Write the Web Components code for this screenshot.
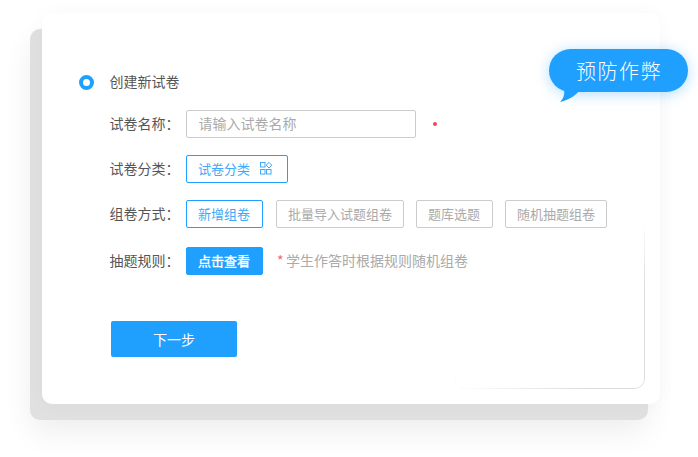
<!DOCTYPE html>
<html lang="zh"><head><meta charset="utf-8">
<style>html,body{margin:0;background:#fff}</style>
</head><body>
<exam-stage>
  <exam-row kind="head"><exam-radio></exam-radio><span>创建新试卷</span></exam-row>
  <exam-row label="试卷名称："><exam-input placeholder="请输入试卷名称"></exam-input><exam-dot></exam-dot></exam-row>
  <exam-row label="试卷分类："><exam-btn variant="outline" w="102"><span>试卷分类</span><exam-icon></exam-icon></exam-btn></exam-row>
  <exam-row label="组卷方式：" class="tall">
    <exam-btn variant="outline" w="77">新增组卷</exam-btn>
    <exam-btn w="128" gap="13">批量导入试题组卷</exam-btn>
    <exam-btn w="77" gap="12">题库选题</exam-btn>
    <exam-btn w="102" gap="12">随机抽题组卷</exam-btn>
  </exam-row>
  <exam-row label="抽题规则："><exam-btn variant="solid" w="77">点击查看</exam-btn><exam-hint>学生作答时根据规则随机组卷</exam-hint></exam-row>
  <exam-next>下一步</exam-next>
  <exam-bubble slot="over">预防作弊</exam-bubble>
</exam-stage>
<script>
const FONT = '"Noto Sans CJK SC","Noto Sans",sans-serif';
function def(name, css, html, init){
  customElements.define(name, class extends HTMLElement{
    constructor(){
      super();
      const r=this.attachShadow({mode:'open'});
      r.innerHTML='<style>'+css+'</style>'+(typeof html==='function'?html(this):html);
    }
    connectedCallback(){ if(init) init(this); }
  });
}
def('exam-stage',`
  :host{display:block;position:relative;width:698px;height:457px;overflow:hidden;font:14px/20px ${FONT};color:#555;box-sizing:border-box;padding:13px 38px 53px 42px}
  .back{position:absolute;left:30px;top:29px;width:618px;height:391px;background:#e0e0e0;border-radius:10px;box-shadow:0 12px 30px rgba(0,0,0,.07)}
  .card{position:relative;box-sizing:border-box;height:391px;background:#fff;border-radius:10px;box-shadow:0 0 20px rgba(0,0,0,.03);padding:59px 0 0 37px;display:flex;flex-direction:column}
  .edge{position:absolute;right:15px;bottom:15px;width:190px;height:170px;box-sizing:border-box;border:1px solid #dcdcdc;border-radius:10px;
    -webkit-mask-image:linear-gradient(to right,transparent 0,#000 70%),linear-gradient(to bottom,transparent 0,#000 40%);-webkit-mask-composite:source-in;mask-composite:intersect}
  ::slotted([slot=over]){position:absolute;left:549px;top:49px}
`,`<div class="back"></div><div class="card"><div class="edge"></div><slot></slot></div><slot name="over"></slot>`);
def('exam-row',`
  :host{display:flex;align-items:center;height:28px;margin-bottom:17px;margin-left:30.5px}
  :host(.tall){margin-bottom:19px}
  :host([kind=head]){height:20px;margin:0 0 18px 0;padding-bottom:0}
  :host([kind=head]) ::slotted(span){padding-bottom:3px}
  .l{width:76.5px;flex:none;white-space:nowrap;padding-bottom:2px}
  slot{display:contents}
`,h=>h.hasAttribute('label')?`<span class="l">${h.getAttribute('label')}</span><slot></slot>`:`<slot></slot>`);
def('exam-radio',`
  :host{display:block;width:15px;height:15px;box-sizing:border-box;border-radius:50%;border:4px solid #1fa0ff;background:#fff;margin-right:15.5px}
`,'');
def('exam-input',`
  :host{display:block;width:230px;height:28px;box-sizing:border-box;border:1px solid #ccc;border-radius:2px;padding:2px 11.5px;color:#aaa;background:#fff}
`,h=>`<span>${h.getAttribute('placeholder')}</span>`);
def('exam-dot',`
  :host{display:block;width:4px;height:4px;border-radius:50%;background:#f0484f;margin-left:17px}
`,'');
def('exam-btn',`
  :host{display:flex;align-items:center;justify-content:flex-start;box-sizing:border-box;height:28px;border:1px solid #ccc;border-radius:2px;padding:0 11px 1px;color:#aaa;white-space:nowrap;background:#fff;font-size:13px}
  :host([variant=outline]){border-color:#1fa0ff;color:#3ea9f7}
  :host([variant=solid]){border-color:#1fa0ff;background:#1fa0ff;color:#fff;-webkit-text-stroke:.35px #fff}
  slot{display:contents}
`,'<slot></slot>',h=>{h.style.width=h.getAttribute('w')+'px';const g=h.getAttribute('gap');if(g)h.style.marginLeft=g+'px';});
def('exam-icon',`
  :host{display:block;width:13px;height:13px;margin-left:10px}
  svg{display:block}
`,`<svg width="13" height="13" viewBox="0 0 13 13" fill="none" stroke="#3ea9f7" stroke-width="1"><rect x=".5" y=".5" width="4.5" height="4.5"/><path d="M9 .4 11.8 3.2 9 6 6.2 3.2Z"/><rect x=".5" y="7.5" width="4.5" height="4.5"/><rect x="6.5" y="7.5" width="4.5" height="4.5"/></svg>`);
def('exam-hint',`
  :host{display:block;margin-left:14px;color:#aaa;white-space:nowrap;padding-bottom:2px}
  i{font-style:normal;color:#f0686c;margin-right:4px;display:inline-block;width:5px}
`,'<i>*</i><slot></slot>');
def('exam-next',`
  :host{display:flex;align-items:center;justify-content:center;width:126px;height:36px;margin:29px 0 0 32px;padding-bottom:1px;background:#1fa0ff;color:#fff;border-radius:2px;box-sizing:border-box;align-self:flex-start}
`,'<slot></slot>');
def('exam-bubble',`
  :host{display:block;width:139px;height:43px;box-sizing:border-box;border-radius:22px;padding-left:1px;background:#1fa0ff;color:#fff;font:300 20px/43px ${FONT};letter-spacing:1.5px;text-align:center;box-shadow:0 2px 14px rgba(31,160,255,.35)}
  svg{position:absolute;left:10px;top:40px}
  span{position:relative}
`,`<svg width="26" height="14" viewBox="0 0 26 14"><path d="M5 0H22C18 5 11 11 1 13 4 10 6 6 5 0Z" fill="#1fa0ff"/></svg><span><slot></slot></span>`);
</script>
</body></html>
